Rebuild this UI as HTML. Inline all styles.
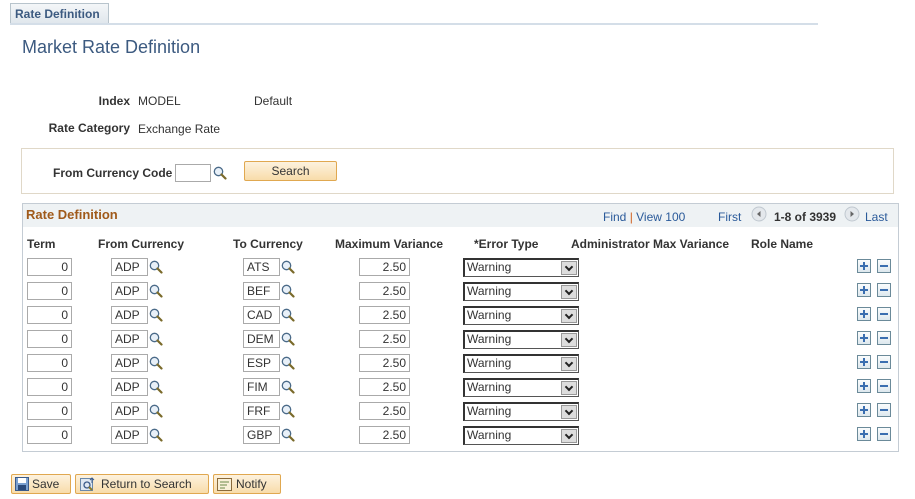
<!DOCTYPE html>
<html><head><style>
*{margin:0;padding:0;box-sizing:border-box}
body{width:915px;height:499px;background:#fff;font-family:"Liberation Sans",Arial,sans-serif;font-size:12px;color:#333;position:relative;overflow:hidden}
.a{position:absolute;white-space:nowrap}
.b{font-weight:bold;color:#333}
.in{position:absolute;height:18px;border:1px solid #aaa;background:#fff;font-size:12px;line-height:16px;padding:0 3px;color:#333}
.r{text-align:right}
.mag{position:absolute;width:14px;height:14px}
.sel{position:absolute;width:116px;height:19px;border:1px solid #555;border-top:2px solid #333;border-left:2px solid #333;background:#fff;font-size:12px;line-height:15px;padding-left:2px;color:#333}
.sel i{position:absolute;right:1px;top:1px;width:16px;height:14px;background:#ddd;border:1px solid #999}
.sel i::after{content:"";position:absolute;left:4px;top:2px;width:4px;height:4px;border-right:2px solid #222;border-bottom:2px solid #222;transform:rotate(45deg)}
.btn{position:absolute;width:14px;height:14px;border:1px solid #6b8a99;background:linear-gradient(#fafcfd,#dde8ee)}
.pl::before,.pl::after,.mi::before{content:"";position:absolute;background:#3a6eb0}
.pl::before{left:2px;top:5px;width:8px;height:2px}
.pl::after{left:5px;top:2px;width:2px;height:8px}
.mi::before{left:2px;top:5px;width:8px;height:2px}
.pb{position:absolute;height:20px;top:474px;border:1px solid #e0a850;background:linear-gradient(#fdf2de,#f8dcaa);border-radius:2px;font-size:12px;line-height:18px;color:#333}
</style></head><body>
<svg width="0" height="0" style="position:absolute"><defs><g id="m"><circle cx="5.5" cy="5.5" r="4.2" fill="#e8f0f8" stroke="#4a6a88" stroke-width="1.3"/><path d="M8.5 8.5 L12.5 12.5" stroke="#7a6a2a" stroke-width="2.2" stroke-linecap="round"/></g></defs></svg>

<div class="a" style="left:10px;top:3px;width:99px;height:21px;border:1px solid #b8c4cc;border-bottom:none;background:linear-gradient(#f4f6f8,#dfe6ec);font-size:12px;font-weight:bold;color:#3c5a80;line-height:20px;padding-left:4px">Rate Definition</div>
<div class="a" style="left:10px;top:23px;width:808px;height:2px;background:#d4dee8"></div>
<div class="a" style="left:22px;top:37px;font-size:18px;color:#3c5a80">Market Rate Definition</div>

<div class="a b" style="left:0;width:130px;text-align:right;top:94px">Index</div>
<div class="a" style="left:138px;top:94px">MODEL</div>
<div class="a" style="left:254px;top:94px">Default</div>
<div class="a b" style="left:0;width:130px;text-align:right;top:121px">Rate Category</div>
<div class="a" style="left:138px;top:122px">Exchange Rate</div>

<div class="a" style="left:21px;top:148px;width:873px;height:46px;border:1px solid #e0d8c8"></div>
<div class="a b" style="left:53px;top:166px">From Currency Code</div>
<div class="in" style="left:175px;top:164px;width:36px"></div>
<svg class="mag" style="left:213px;top:166px"><use href="#m"/></svg>
<div class="a" style="left:244px;top:161px;width:93px;height:20px;border:1px solid #e0a850;border-radius:2px;background:linear-gradient(#fdf2de,#f8dcaa);text-align:center;line-height:18px">Search</div>

<div class="a" style="left:22px;top:203px;width:877px;height:249px;border:1px solid #c4ccd4"></div>
<div class="a" style="left:23px;top:204px;width:875px;height:23px;background:#eef2f4"></div>
<div class="a" style="left:26px;top:207px;font-weight:bold;color:#a05a1a;font-size:13px">Rate Definition</div>
<div class="a" style="left:603px;top:210px;color:#2a5a9a">Find <span style="color:#d06020">|</span> View 100</div>
<div class="a" style="left:718px;top:210px;color:#2a5a9a">First</div>
<svg class="a" style="left:751px;top:206px" width="16" height="16"><circle cx="8" cy="8" r="7" fill="#e4e8ec" stroke="#c0c8d0"/><path d="M9.5 5 L6 8 L9.5 11Z" fill="#666"/></svg>
<div class="a b" style="left:774px;top:210px">1-8 of 3939</div>
<svg class="a" style="left:844px;top:206px" width="16" height="16"><circle cx="8" cy="8" r="7" fill="#e4e8ec" stroke="#c0c8d0"/><path d="M6.5 5 L10 8 L6.5 11Z" fill="#666"/></svg>
<div class="a" style="left:865px;top:210px;color:#2a5a9a">Last</div>

<div class="a b" style="left:27px;top:237px">Term</div>
<div class="a b" style="left:98px;top:237px">From Currency</div>
<div class="a b" style="left:233px;top:237px">To Currency</div>
<div class="a b" style="left:335px;top:237px">Maximum Variance</div>
<div class="a b" style="left:474px;top:237px">*Error Type</div>
<div class="a b" style="left:571px;top:237px">Administrator Max Variance</div>
<div class="a b" style="left:751px;top:237px">Role Name</div>

<div style="position:absolute;left:0;top:258px">
<div class="in r" style="left:27px;top:0;width:45px">0</div><div class="in" style="left:111px;top:0;width:37px">ADP</div><svg class="mag" style="left:149px;top:2px"><use href="#m"/></svg><div class="in" style="left:243px;top:0;width:37px">ATS</div><svg class="mag" style="left:281px;top:2px"><use href="#m"/></svg><div class="in r" style="left:359px;top:0;width:51px">2.50</div><div class="sel" style="left:463px;top:0">Warning<i></i></div><div class="btn pl" style="left:857px;top:1px"></div><div class="btn mi" style="left:877px;top:1px"></div>
</div>
<div style="position:absolute;left:0;top:282px">
<div class="in r" style="left:27px;top:0;width:45px">0</div><div class="in" style="left:111px;top:0;width:37px">ADP</div><svg class="mag" style="left:149px;top:2px"><use href="#m"/></svg><div class="in" style="left:243px;top:0;width:37px">BEF</div><svg class="mag" style="left:281px;top:2px"><use href="#m"/></svg><div class="in r" style="left:359px;top:0;width:51px">2.50</div><div class="sel" style="left:463px;top:0">Warning<i></i></div><div class="btn pl" style="left:857px;top:1px"></div><div class="btn mi" style="left:877px;top:1px"></div>
</div>
<div style="position:absolute;left:0;top:306px">
<div class="in r" style="left:27px;top:0;width:45px">0</div><div class="in" style="left:111px;top:0;width:37px">ADP</div><svg class="mag" style="left:149px;top:2px"><use href="#m"/></svg><div class="in" style="left:243px;top:0;width:37px">CAD</div><svg class="mag" style="left:281px;top:2px"><use href="#m"/></svg><div class="in r" style="left:359px;top:0;width:51px">2.50</div><div class="sel" style="left:463px;top:0">Warning<i></i></div><div class="btn pl" style="left:857px;top:1px"></div><div class="btn mi" style="left:877px;top:1px"></div>
</div>
<div style="position:absolute;left:0;top:330px">
<div class="in r" style="left:27px;top:0;width:45px">0</div><div class="in" style="left:111px;top:0;width:37px">ADP</div><svg class="mag" style="left:149px;top:2px"><use href="#m"/></svg><div class="in" style="left:243px;top:0;width:37px">DEM</div><svg class="mag" style="left:281px;top:2px"><use href="#m"/></svg><div class="in r" style="left:359px;top:0;width:51px">2.50</div><div class="sel" style="left:463px;top:0">Warning<i></i></div><div class="btn pl" style="left:857px;top:1px"></div><div class="btn mi" style="left:877px;top:1px"></div>
</div>
<div style="position:absolute;left:0;top:354px">
<div class="in r" style="left:27px;top:0;width:45px">0</div><div class="in" style="left:111px;top:0;width:37px">ADP</div><svg class="mag" style="left:149px;top:2px"><use href="#m"/></svg><div class="in" style="left:243px;top:0;width:37px">ESP</div><svg class="mag" style="left:281px;top:2px"><use href="#m"/></svg><div class="in r" style="left:359px;top:0;width:51px">2.50</div><div class="sel" style="left:463px;top:0">Warning<i></i></div><div class="btn pl" style="left:857px;top:1px"></div><div class="btn mi" style="left:877px;top:1px"></div>
</div>
<div style="position:absolute;left:0;top:378px">
<div class="in r" style="left:27px;top:0;width:45px">0</div><div class="in" style="left:111px;top:0;width:37px">ADP</div><svg class="mag" style="left:149px;top:2px"><use href="#m"/></svg><div class="in" style="left:243px;top:0;width:37px">FIM</div><svg class="mag" style="left:281px;top:2px"><use href="#m"/></svg><div class="in r" style="left:359px;top:0;width:51px">2.50</div><div class="sel" style="left:463px;top:0">Warning<i></i></div><div class="btn pl" style="left:857px;top:1px"></div><div class="btn mi" style="left:877px;top:1px"></div>
</div>
<div style="position:absolute;left:0;top:402px">
<div class="in r" style="left:27px;top:0;width:45px">0</div><div class="in" style="left:111px;top:0;width:37px">ADP</div><svg class="mag" style="left:149px;top:2px"><use href="#m"/></svg><div class="in" style="left:243px;top:0;width:37px">FRF</div><svg class="mag" style="left:281px;top:2px"><use href="#m"/></svg><div class="in r" style="left:359px;top:0;width:51px">2.50</div><div class="sel" style="left:463px;top:0">Warning<i></i></div><div class="btn pl" style="left:857px;top:1px"></div><div class="btn mi" style="left:877px;top:1px"></div>
</div>
<div style="position:absolute;left:0;top:426px">
<div class="in r" style="left:27px;top:0;width:45px">0</div><div class="in" style="left:111px;top:0;width:37px">ADP</div><svg class="mag" style="left:149px;top:2px"><use href="#m"/></svg><div class="in" style="left:243px;top:0;width:37px">GBP</div><svg class="mag" style="left:281px;top:2px"><use href="#m"/></svg><div class="in r" style="left:359px;top:0;width:51px">2.50</div><div class="sel" style="left:463px;top:0">Warning<i></i></div><div class="btn pl" style="left:857px;top:1px"></div><div class="btn mi" style="left:877px;top:1px"></div>
</div>

<div class="pb" style="left:11px;width:60px"><svg style="position:absolute;left:3px;top:2px" width="14" height="14"><rect x="0.5" y="0.5" width="13" height="13" fill="#7aa0d0" stroke="#3a5a8a"/><rect x="3" y="1" width="8" height="5" fill="#fff"/><rect x="3" y="8" width="8" height="5" fill="#2a4a7a"/></svg><span style="position:absolute;left:20px">Save</span></div>
<div class="pb" style="left:75px;width:134px"><svg style="position:absolute;left:4px;top:2px" width="16" height="15"><rect x="0.5" y="1.5" width="12" height="12" fill="#dfe8f2" stroke="#6a88aa"/><circle cx="7" cy="8" r="3" fill="none" stroke="#3a5a8a" stroke-width="1.3"/><path d="M9 10 L12 13" stroke="#8a7a2a" stroke-width="2"/><path d="M12 6 L12 1 M10 3 L12 1 L14 3" stroke="#3a5a8a" fill="none"/></svg><span style="position:absolute;left:25px">Return to Search</span></div>
<div class="pb" style="left:213px;width:68px"><svg style="position:absolute;left:3px;top:3px" width="15" height="13"><rect x="0.5" y="0.5" width="14" height="12" fill="#f8f0d8" stroke="#8a6a3a"/><path d="M3 4 H12 M3 7 H10 M3 10 H8" stroke="#6a8a4a"/></svg><span style="position:absolute;left:22px">Notify</span></div>
</body></html>
